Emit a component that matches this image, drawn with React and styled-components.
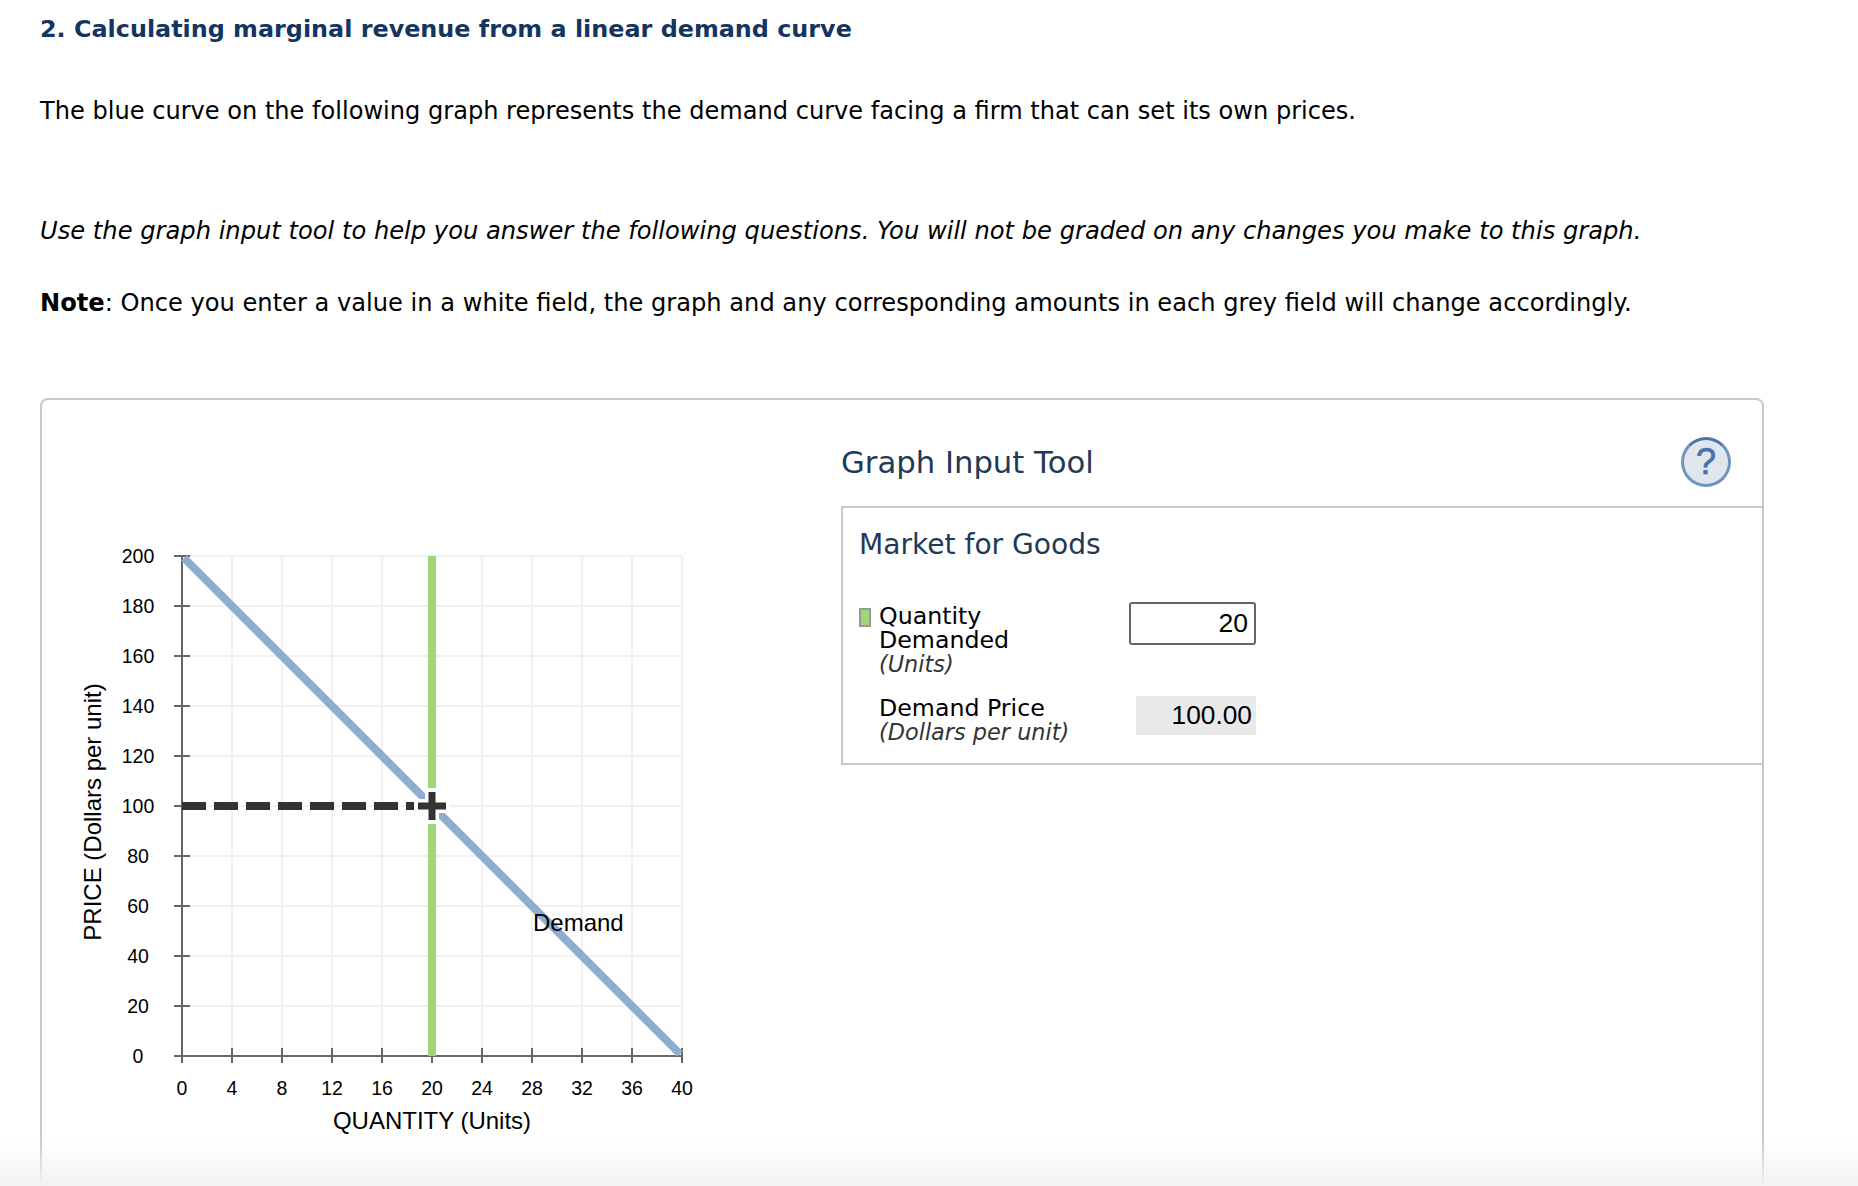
import styled, { createGlobalStyle } from 'styled-components'

const GlobalStyle = createGlobalStyle`
  html, body {
    margin: 0;
    padding: 0;
    background: #fff;
    height: 100%;
    overflow: hidden;
  }
`

const yTicks = [0, 20, 40, 60, 80, 100, 120, 140, 160, 180, 200]
const xTicks = [0, 4, 8, 12, 16, 20, 24, 28, 32, 36, 40]
const toX = q => q * 12.5
const toY = p => 500 - p * 2.5

const Chart = () => (
  <ChartSvg viewBox="0 0 780 760">
    {/* plot origin sits at 140,156 inside the svg */}
    <g transform="translate(140 156)" fontFamily="'Liberation Sans', Arial, sans-serif" fill="#000">
      {yTicks.map(p => (
        <line key={p} x1="0" x2="500" y1={toY(p)} y2={toY(p)} stroke="#f0f0f0" strokeWidth="2" />
      ))}
      {xTicks.map(q => (
        <line key={q} x1={toX(q)} x2={toX(q)} y1="0" y2="500" stroke="#f0f0f0" strokeWidth="2" />
      ))}

      <line x1="0" x2="0" y1="0" y2="500" stroke="#666" strokeWidth="2" />
      <line x1="0" x2="500" y1="500" y2="500" stroke="#666" strokeWidth="2" />
      {yTicks.map(p => (
        <line key={p} x1="-8" x2="8" y1={toY(p)} y2={toY(p)} stroke="#666" strokeWidth="2" />
      ))}
      {xTicks.map(q => (
        <line key={q} x1={toX(q)} x2={toX(q)} y1="492" y2="507" stroke="#666" strokeWidth="2" />
      ))}

      {yTicks.map(p => (
        <text key={p} x="-44" y={toY(p) + 7} fontSize="19.5" textAnchor="middle">{p}</text>
      ))}
      {xTicks.map(q => (
        <text key={q} x={toX(q)} y="539" fontSize="19.5" textAnchor="middle">{q}</text>
      ))}

      <text x="250" y="573" fontSize="24" textAnchor="middle">QUANTITY (Units)</text>
      <text transform="translate(-81 256) rotate(-90)" fontSize="24" textAnchor="middle">PRICE (Dollars per unit)</text>

      <line x1="250" x2="250" y1="0" y2="500" stroke="#a0d67a" strokeWidth="8" />
      <line x1="2" y1="2" x2="498" y2="498" stroke="#8fadd3" strokeWidth="8" />
      <line x1="0" x2="232" y1="250" y2="250" stroke="#333" strokeWidth="8" strokeDasharray="24 8" />

      {/* white halo under the marker */}
      <path d="M250 232V268M232 250H268" stroke="#fff" strokeWidth="14" />
      <path d="M250 236V264M236 250H264" stroke="#333" strokeWidth="7" />

      <text x="351" y="375" fontSize="24">Demand</text>
    </g>
  </ChartSvg>
)

export default function App() {
  return (
    <Page>
      <GlobalStyle />
      <Title>2. Calculating marginal revenue from a linear demand curve</Title>
      <Intro>The blue curve on the following graph represents the demand curve facing a firm that can set its own prices.</Intro>
      <Instruction>Use the graph input tool to help you answer the following questions. You will not be graded on any changes you make to this graph.</Instruction>
      <Note><strong>Note</strong>: Once you enter a value in a white field, the graph and any corresponding amounts in each grey field will change accordingly.</Note>

      <Card>
        <Chart />
        <Tool>
          <ToolHeader>
            <ToolTitle>Graph Input Tool</ToolTitle>
            <HelpButton>?</HelpButton>
          </ToolHeader>
          <Market>
            <MarketTitle>Market for Goods</MarketTitle>
            <FieldRow>
              <Swatch />
              <FieldLabel>
                <LabelName>Quantity Demanded</LabelName>
                <LabelUnit>(Units)</LabelUnit>
              </FieldLabel>
              <ValueInput defaultValue="20" />
            </FieldRow>
            <FieldRow $computed>
              <SwatchGap />
              <FieldLabel>
                <LabelName>Demand Price</LabelName>
                <LabelUnit>(Dollars per unit)</LabelUnit>
              </FieldLabel>
              <ComputedValue>100.00</ComputedValue>
            </FieldRow>
          </Market>
        </Tool>
      </Card>
      <BottomFade />
    </Page>
  )
}

const Page = styled.div`
  position: relative;
  width: 1858px;
  height: 1186px;
  overflow: hidden;
  padding: 15px 0 0 40px;
  box-sizing: border-box;
  font-family: 'DejaVu Sans', Verdana, sans-serif;
  color: #000;
`

const Title = styled.h2`
  margin: 0;
  font-size: 23.86px;
  line-height: 29px;
  font-weight: 700;
  color: #14355f;
`

const Intro = styled.p`
  margin: 53px 0 0;
  font-size: 24.09px;
  line-height: 29px;
`

const Instruction = styled.p`
  margin: 91px 0 0;
  font-size: 24.18px;
  line-height: 29px;
  font-style: italic;
`

const Note = styled.p`
  margin: 43px 0 0;
  font-size: 24.13px;
  line-height: 29px;
`

const Card = styled.div`
  display: flex;
  width: 1724px;
  height: 900px;
  margin-top: 80px;
  box-sizing: border-box;
  border: 2px solid #c8c8c8;
  border-radius: 8px;
`

const ChartSvg = styled.svg`
  flex: none;
  width: 780px;
  height: 760px;
`

const Tool = styled.div`
  flex: 1;
  margin-left: 19px;
`

const ToolHeader = styled.div`
  display: flex;
  align-items: center;
  justify-content: space-between;
  height: 106px;
  padding: 18px 31px 0 0;
  box-sizing: border-box;
`

const ToolTitle = styled.div`
  font-size: 30.7px;
  color: #1f3a57;
`

const HelpButton = styled.div`
  width: 50px;
  height: 50px;
  box-sizing: border-box;
  border: 3px solid #7293bd;
  border-top-color: #4a74aa;
  border-radius: 50%;
  background: #e0e6ee;
  color: #4a72a6;
  font-family: 'Liberation Sans', Arial, sans-serif;
  font-size: 36px;
  font-weight: 400;
  -webkit-text-stroke: 0.7px #4a72a6;
  line-height: 44px;
  text-align: center;
`

const Market = styled.div`
  height: 259px;
  box-sizing: border-box;
  padding: 20px 0 0 16px;
  border: 2px solid #c8c8c8;
  border-right: 0;
`

const MarketTitle = styled.div`
  font-size: 28.1px;
  line-height: 34px;
  color: #1f3a57;
  margin-bottom: 42px;
`

const FieldRow = styled.div`
  display: flex;
  align-items: flex-start;
  margin-top: ${p => (p.$computed ? '20px' : '0')};
`

const Swatch = styled.div`
  flex: none;
  width: 12px;
  height: 19px;
  margin: 4px 8px 0 0;
  box-sizing: border-box;
  background: #a0d67a;
  border: 2px solid #999;
`

const SwatchGap = styled.div`
  flex: none;
  width: 20px;
`

const FieldLabel = styled.div`
  width: 250px;
  font-size: 23.7px;
  line-height: 24px;
`

const LabelName = styled.div`
  width: 180px;
`

const LabelUnit = styled.div`
  font-size: 22.4px;
  font-style: italic;
  color: #333;
`

const ValueInput = styled.input`
  width: 127px;
  height: 43px;
  box-sizing: border-box;
  margin-top: -2px;
  padding: 0 6px 0 5px;
  border: 2px solid #666;
  border-radius: 3px;
  background: #fff;
  text-align: right;
  font-family: 'Liberation Sans', Arial, sans-serif;
  font-size: 26.5px;
  color: #000;
  outline: none;
`

const ComputedValue = styled.div`
  width: 120px;
  height: 39px;
  margin: 0 0 0 7px;
  padding-right: 4px;
  box-sizing: border-box;
  background: #e9e9e9;
  text-align: right;
  font-family: 'Liberation Sans', Arial, sans-serif;
  font-size: 26.3px;
  line-height: 39px;
`

const BottomFade = styled.div`
  position: absolute;
  left: 0;
  right: 0;
  bottom: 0;
  height: 48px;
  background: linear-gradient(to bottom, rgba(243, 243, 243, 0), #f3f3f3);
  pointer-events: none;
`
